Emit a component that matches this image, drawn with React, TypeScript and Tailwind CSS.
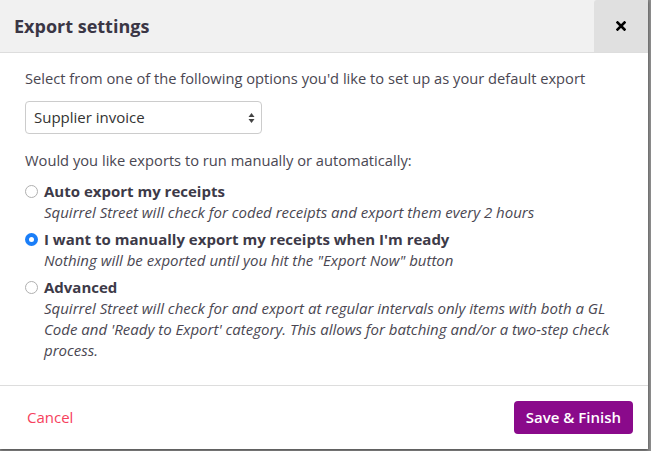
import React from "react";

function Radio({ checked }: { checked?: boolean }) {
  if (checked) {
    return (
      <span className="mt-[4px] flex h-[13px] w-[13px] shrink-0 items-center justify-center rounded-full bg-[#1a7ef8]">
        <span className="h-[5px] w-[5px] rounded-full bg-white" />
      </span>
    );
  }
  return (
    <span className="mt-[4px] h-[13px] w-[13px] shrink-0 rounded-full border border-[#b0b0b0] bg-white" />
  );
}

function Option({
  checked,
  title,
  desc,
}: {
  checked?: boolean;
  title: string;
  desc: string;
}) {
  return (
    <div className="flex gap-[6px]">
      <Radio checked={checked} />
      <div>
        <div className="text-[15px] font-bold leading-[21px] text-[#3d3a48]">{title}</div>
        <div className="text-[15px] italic leading-[21px] text-[#4a4752]">{desc}</div>
      </div>
    </div>
  );
}

export default function App() {
  return (
    <div
      className="h-[451px] w-[651px] overflow-hidden bg-[#8e8e8e]"
      style={{ fontFamily: '"Open Sans", "Liberation Sans", sans-serif' }}
    >
      <div className="flex h-[449px] w-[648px] flex-col bg-white shadow-[0_1px_3px_rgba(0,0,0,0.5)]">
        <div className="flex h-[53px] shrink-0 items-stretch border-b border-[#dddddd] bg-[#f1f1f1]">
          <div className="flex flex-1 items-center pl-[14px] text-[18px] font-bold text-[#3a3645]">
            Export settings
          </div>
          <div className="flex w-[54px] items-center justify-center rounded-tl-[3px] bg-[#e0e0e0]">
            <svg width="10" height="10" viewBox="0 0 10 10">
              <path d="M1.5 1.5 L8.5 8.5 M8.5 1.5 L1.5 8.5" stroke="#000" strokeWidth="2.6" strokeLinecap="square" />
            </svg>
          </div>
        </div>
        <div className="flex-1 px-[25px] pt-[15px] text-[#4a4752]">
          <p className="text-[14.7px] leading-[21px]">
            Select from one of the following options you'd like to set up as your default export
          </p>
          <div className="mt-[12px] flex h-[33px] w-[237px] items-center justify-between rounded-[4px] border border-[#cccccc] bg-white pl-[8px] pr-[6px] text-[15px] text-[#333]">
            <span>Supplier invoice</span>
            <svg width="7" height="12" viewBox="0 0 7 12">
              <path d="M3.5 1 L6.5 5 L0.5 5 Z" fill="#444" />
              <path d="M3.5 11 L6.5 7 L0.5 7 Z" fill="#444" />
            </svg>
          </div>
          <p className="mt-[16px] text-[14.7px] leading-[21px]">
            Would you like exports to run manually or automatically:
          </p>
          <div className="mt-[10px] flex flex-col gap-[6px]">
            <Option
              title="Auto export my receipts"
              desc="Squirrel Street will check for coded receipts and export them every 2 hours"
            />
            <Option
              checked
              title="I want to manually export my receipts when I'm ready"
              desc={'Nothing will be exported until you hit the "Export Now" button'}
            />
            <Option
              title="Advanced"
              desc="Squirrel Street will check for and export at regular intervals only items with both a GL Code and 'Ready to Export' category. This allows for batching and/or a two-step check process."
            />
          </div>
        </div>
        <div className="flex h-[64px] shrink-0 items-center justify-between border-t border-[#dddddd] pl-[27px] pr-[15px]">
          <button className="text-[15px] text-[#f6415c]">Cancel</button>
          <button className="h-[33px] rounded-[4px] bg-[#8a0a8b] px-[12px] text-[15px] font-semibold text-white">
            Save &amp; Finish
          </button>
        </div>
      </div>
    </div>
  );
}
